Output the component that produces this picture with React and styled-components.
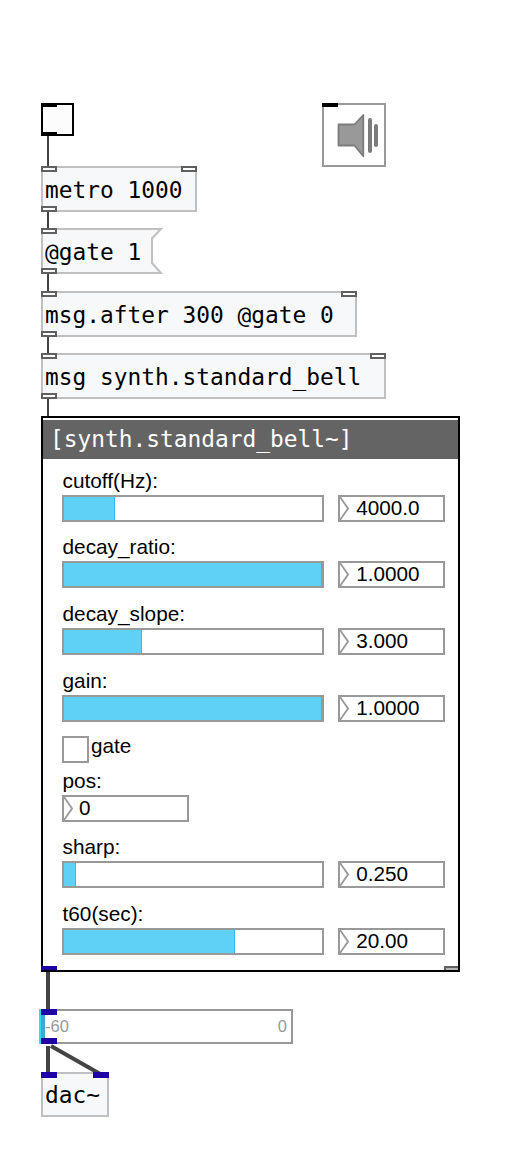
import React from "react";
import styled, { createGlobalStyle } from "styled-components";

const Global = createGlobalStyle`
  body { margin: 0; background: #fff; }
  * { box-sizing: border-box; }
`;

const Canvas = styled.main`
  position: relative;
  width: 523px;
  height: 1150px;
  overflow: hidden;
  background: #fff;
  font-family: "Liberation Sans", Arial, sans-serif;
`;

const Cords = styled.svg`
  position: absolute;
  inset: 0;
`;

const Node = styled.div`
  position: absolute;
  left: ${(p) => p.$x}px;
  top: ${(p) => p.$y}px;
  width: ${(p) => p.$w}px;
  height: ${(p) => p.$h}px;
`;

const ObjectBox = styled(Node)`
  display: flex;
  align-items: center;
  padding: 1px 0 0 2px;
  border: 2px solid ${(p) => (p.$plain ? "transparent" : "#c0c0c0")};
  background: ${(p) => (p.$plain ? "transparent" : "#f6f8fa")};
`;

const Code = styled.span`
  z-index: 1;
  font-family: "DejaVu Sans Mono", monospace;
  font-size: 22.85px;
  line-height: 28px;
  white-space: pre;
  color: ${(p) => p.$color || "#000"};
`;

const ToggleBox = styled(Node)`
  border: 2px solid #000;
  background: #fcfcfc;
`;

const SpeakerBox = styled(Node)`
  border: 2px solid #999;
  background: #fff;
`;

const Port = styled.i`
  position: absolute;
  width: 16px;
  height: ${(p) => p.$h || 6}px;
  ${(p) => (p.$right ? "right: -2px;" : "left: -2px;")}
  ${(p) => (p.$bottom ? "bottom: -2px;" : "top: -2px;")}
  border: 2px solid ${(p) => p.$color || "#606060"};
  background: ${(p) => p.$color || "#fff"};
`;

const SignalOutlet = styled.i`
  position: absolute;
  left: -2px;
  bottom: 0;
  width: 16px;
  height: 4px;
  background: #1e00a5;
`;

const CornerOutlet = styled.i`
  position: absolute;
  right: 0;
  bottom: 0;
  width: 14px;
  height: 4px;
  border: solid #606060;
  border-width: 2px 0 0 2px;
  background: #b5b5b5;
`;

const MessageShape = styled.svg`
  position: absolute;
  left: -2px;
  top: -2px;
`;

const Panel = styled(Node)`
  display: flex;
  flex-direction: column;
  border: 2px solid #000;
  background: #fff;
`;

const PanelTitle = styled.header`
  display: flex;
  align-items: center;
  height: 39px;
  margin-top: 2px;
  padding: 0 0 2px 7px;
  background: #646464;
`;

const Params = styled.div`
  display: flex;
  flex-direction: column;
  gap: 12.65px;
  padding: 8.6px 13px 0 19px;
`;

const Param = styled.section`
  display: flex;
  flex-direction: column;
`;

const Label = styled.label`
  height: 27px;
  padding-left: 0.5px;
  font-size: 20.8px;
  line-height: 25.5px;
  color: #000;
`;

const Controls = styled.div`
  display: flex;
  gap: 14px;
`;

const Slider = styled.div`
  width: 263px;
  height: 27px;
  border: 2px solid #999;
  background: #fff;
`;

const Fill = styled.div`
  height: 100%;
  background: #5fd1f7;
  border-right: 1px solid #35b9e6;
`;

const NumberBox = styled.div`
  display: flex;
  width: ${(p) => p.$w || 107}px;
  height: 27px;
  border: 2px solid #999;
  background: #fff;
  font-size: 20.7px;
  line-height: 21px;
`;

const Arrow = styled.svg`
  flex: none;
  margin-right: ${(p) => (p.$tight ? 6 : 7)}px;
`;

const CheckRow = styled.div`
  display: flex;
  gap: 2px;
  height: 27px;
  margin: 2px 0 -8px;
  font-size: 20.7px;
  line-height: 20px;
`;

const Check = styled.div`
  width: 27px;
  height: 27px;
  border: 2px solid #999;
`;

const Meter = styled(Node)`
  display: flex;
  align-items: center;
  justify-content: space-between;
  padding: 0 4px 0 2px;
  border: 2px solid #999;
  font-size: 16.5px;
  color: #999;
`;

const MeterLevel = styled.i`
  position: absolute;
  left: -4px;
  top: -2px;
  bottom: -2px;
  width: 6px;
  border-left: 2px solid #2bdcf8;
  background: #40a9d0;
`;

const SIGNAL = "#1e00a5";

const Number = ({ value, width }) => (
  <NumberBox $w={width}>
    <Arrow $tight={Boolean(width)} width="9" height="23" fill="none" stroke="#999" strokeWidth="1.8">
      <path d="M0 0 L8 11.5 L0 23" />
    </Arrow>
    {value}
  </NumberBox>
);

const SliderParam = ({ name, value, fill }) => (
  <Param>
    <Label>{name}</Label>
    <Controls>
      <Slider><Fill style={{ width: `${fill}%` }} /></Slider>
      <Number value={value} />
    </Controls>
  </Param>
);

const PatchObject = ({ y, w, text }) => (
  <ObjectBox $x={41} $y={y} $w={w} $h={46}>
    <Port /><Port $right /><Port $bottom />
    <Code>{text}</Code>
  </ObjectBox>
);

export default function App() {
  return (
    <>
      <Global />
      <Canvas>
        <Cords width="523" height="1150" stroke="#444" strokeWidth="2">
          <path d="M48 136V168M48 210V230M48 272V293M48 335V355M48 398V417" />
          <path d="M48 970V1010M48 1046V1074M51 1046L102 1075" strokeWidth="4" />
        </Cords>

        <ToggleBox $x={41} $y={103} $w={33} $h={33}>
          <Port $color="#000" $h={4} />
          <Port $color="#000" $h={4} $bottom />
        </ToggleBox>

        <SpeakerBox $x={322} $y={103} $w={64} $h={64}>
          <Port $color="#000" $h={4} />
          <svg width="60" height="60">
            <path d="M14.5 19.5H30.5L39.3 10V51.3L30.5 40.5H14.5Z" fill="#999" stroke="#7c7c7c" strokeWidth="1.8" strokeLinejoin="round" />
            <path d="M46 15V46M52 21V40" stroke="#7c7c7c" strokeWidth="4" strokeLinecap="round" />
          </svg>
        </SpeakerBox>

        <PatchObject y={166} w={156} text="metro 1000" />

        <ObjectBox $x={41} $y={228} $w={122} $h={46} $plain>
          <MessageShape width="124" height="46">
            <path d="M1 1H120L111 10.5V35L120 45H1Z" fill="#f6f8fa" stroke="#c0c0c0" strokeWidth="2" />
          </MessageShape>
          <Port /><Port $bottom />
          <Code>@gate 1</Code>
        </ObjectBox>

        <PatchObject y={291} w={316} text="msg.after 300 @gate 0" />
        <PatchObject y={353} w={345} text="msg synth.standard_bell" />

        <Panel $x={41} $y={416} $w={419} $h={556}>
          <PanelTitle><Code $color="#fff">[synth.standard_bell~]</Code></PanelTitle>
          <Params>
            <SliderParam name="cutoff(Hz):" value="4000.0" fill={19.8} />
            <SliderParam name="decay_ratio:" value="1.0000" fill={100} />
            <SliderParam name="decay_slope:" value="3.000" fill={30.2} />
            <SliderParam name="gain:" value="1.0000" fill={100} />
            <CheckRow><Check />gate</CheckRow>
            <Param>
              <Label>pos:</Label>
              <Number value="0" width={127} />
            </Param>
            <SliderParam name="sharp:" value="0.250" fill={4.5} />
            <SliderParam name="t60(sec):" value="20.00" fill={66.4} />
          </Params>
          <SignalOutlet />
          <CornerOutlet />
        </Panel>

        <Meter $x={41} $y={1009} $w={252} $h={35}>
          <MeterLevel />
          <Port $color={SIGNAL} /><Port $color={SIGNAL} $bottom />
          <span>-60</span>
          <span>0</span>
        </Meter>

        <ObjectBox $x={41} $y={1072} $w={68} $h={45}>
          <Port $color={SIGNAL} /><Port $color={SIGNAL} $right />
          <Code>dac~</Code>
        </ObjectBox>
      </Canvas>
    </>
  );
}
